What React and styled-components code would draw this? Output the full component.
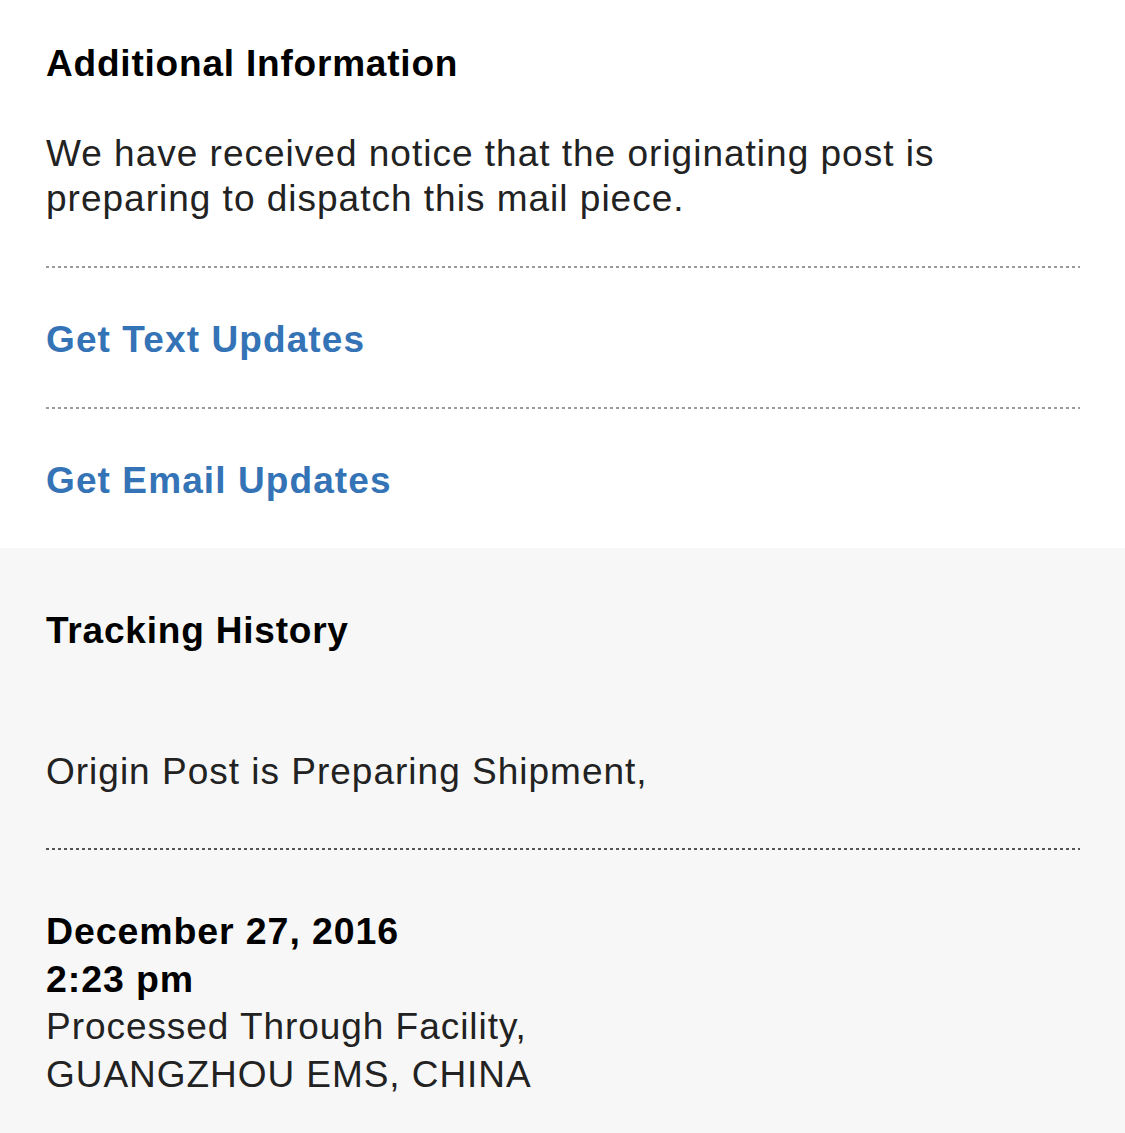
import React from "react";
import styled, { createGlobalStyle } from "styled-components";

const Global = createGlobalStyle`
  html, body { margin: 0; padding: 0; background: #f7f7f7; }
  body { font-family: "Liberation Sans", Arial, Helvetica, sans-serif; -webkit-font-smoothing: antialiased; }
`;

const Page = styled.div`
  width: 1125px;
  min-height: 1133px;
  display: flex;
  flex-direction: column;
`;

const Section = styled.section`
  background: ${(p) => (p.$muted ? "#f7f7f7" : "#ffffff")};
  padding: ${(p) => p.$pad};
  padding-left: 46px;
  padding-right: 45px;
`;

const Heading = styled.h2`
  margin: 0;
  font-size: 37px;
  line-height: 44px;
  letter-spacing: 0.8px;
  font-weight: 700;
  color: #000;
`;

const Paragraph = styled.p`
  margin: ${(p) => p.$margin || "0"};
  font-size: 37px;
  line-height: ${(p) => p.$lh || "45px"};
  letter-spacing: 1px;
  font-weight: 400;
  color: #222;
`;

const Divider = styled.div`
  height: 2px;
  background-image: repeating-linear-gradient(
    to right,
    ${(p) => p.$color} 0 3px,
    transparent 3px 6px
  );
`;

const LinkRow = styled.div`
  padding: 50px 0 45px;
`;

const Link = styled.a`
  font-size: 37px;
  line-height: 44px;
  letter-spacing: 1.1px;
  font-weight: 700;
  color: #3473b6;
  text-decoration: none;
  display: block;
`;

const Event = styled.div`
  margin-top: 57px;
  display: flex;
  flex-direction: column;
`;

const EventLine = styled.div`
  font-size: ${(p) => (p.$bold ? "37.5px" : "37px")};
  line-height: 48px;
  letter-spacing: ${(p) => (p.$bold ? "0.9px" : "0.95px")};
  font-weight: ${(p) => (p.$bold ? 700 : 400)};
  color: ${(p) => (p.$bold ? "#000" : "#222")};
`;

export default function App() {
  return (
    <>
      <Global />
      <Page>
        <Section $pad="42px 0 0">
          <Heading>Additional Information</Heading>
          <Paragraph $margin="45px 0 45px">
            We have received notice that the originating post is
            <br />
            preparing to dispatch this mail piece.
          </Paragraph>
          <Divider $color="#9a9a9a" />
          <LinkRow>
            <Link href="#">Get Text Updates</Link>
          </LinkRow>
          <Divider $color="#9a9a9a" />
          <LinkRow>
            <Link href="#">Get Email Updates</Link>
          </LinkRow>
        </Section>
        <Section $muted $pad="61px 0 34px">
          <Heading>Tracking History</Heading>
          <Paragraph $margin="95px 0 52px" $lh="48px">
            Origin Post is Preparing Shipment,
          </Paragraph>
          <Divider $color="#555555" />
          <Event>
            <EventLine $bold>December 27, 2016</EventLine>
            <EventLine $bold>2:23 pm</EventLine>
            <EventLine>Processed Through Facility,</EventLine>
            <EventLine>GUANGZHOU EMS, CHINA</EventLine>
          </Event>
        </Section>
      </Page>
    </>
  );
}
